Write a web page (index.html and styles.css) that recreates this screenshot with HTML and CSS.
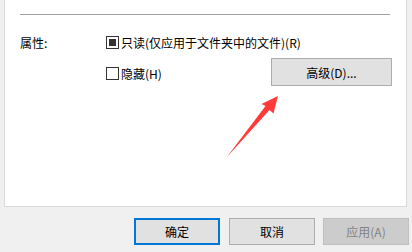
FILE: index.html
```html
<!DOCTYPE html>
<html lang="zh-CN">
<head>
    <meta charset="UTF-8">
    <meta name="viewport" content="width=device-width, initial-scale=1.0">
    <title>属性</title>
    <link rel="stylesheet" href="styles.css">
</head>
<body>
    <div class="dialog">
        <div class="panel">
            <div class="separator"></div>
            <div class="attr-row first">
                <span class="attr-label">属性:</span>
                <label class="check">
                    <span class="box checked"></span>
                    <span>只读(仅应用于文件夹中的文件)(R)</span>
                </label>
            </div>
            <div class="attr-row second">
                <span class="attr-label"></span>
                <label class="check">
                    <span class="box"></span>
                    <span>隐藏(H)</span>
                </label>
                <button class="btn advanced">高级(D)...</button>
            </div>
        </div>
        <div class="actions">
            <button class="btn default">确定</button>
            <button class="btn">取消</button>
            <button class="btn disabled">应用(A)</button>
        </div>
    </div>

    <!-- annotation arrow pointing at the advanced button -->
    <svg class="arrow" width="412" height="252" viewBox="0 0 412 252">
        <polygon points="278,96 273.5,113.5 269.5,110 226.5,157.5 265.5,106 261.5,104" fill="#ff3a3a"/>
    </svg>
</body>
</html>
```

FILE: styles.css
```css
/* Reset default browser styles */
body, html {
    margin: 0;
    padding: 0;
    height: 252px;
    overflow: hidden;
    background: #f0f0f0;
    font-family: "Noto Sans CJK SC", "Noto Sans", sans-serif;
    font-size: 12px;
    color: #000;
}

.dialog {
    display: flex;
    flex-direction: column;
    height: 100%;
}

.panel {
    margin: 0 5px 0 4px;
    height: 207px;
    box-sizing: border-box;
    background: #fff;
    border: 1px solid #d9d9d9;
    border-top: none;
    padding: 14px 15px 0 15px;
}

.separator {
    height: 1px;
    background: #a0a0a0;
    margin-right: 1px;
}

.attr-row {
    display: flex;
    align-items: center;
}

.attr-row.first {
    margin-top: 21px;
    height: 13px;
}

.attr-row.second {
    margin-top: 9px;
    height: 28px;
}

.attr-label {
    width: 86px;
    flex-shrink: 0;
    line-height: 13px;
}

.check {
    display: flex;
    align-items: center;
    gap: 1px;
    line-height: 13px;
    white-space: nowrap;
}

.attr-row.second .check {
    margin-top: 2px;
}

.box {
    width: 13px;
    height: 13px;
    box-sizing: border-box;
    border: 1px solid #333;
    background: #fff;
    padding: 2px;
    margin-right: 1px;
}

.box.checked::after {
    content: "";
    display: block;
    width: 7px;
    height: 7px;
    background: #333;
}

.btn {
    font-family: inherit;
    font-size: 12px;
    color: #000;
    background: #e1e1e1;
    border: 1px solid #adadad;
    padding: 0;
    box-sizing: border-box;
}

.advanced {
    margin-left: auto;
    margin-right: -1px;
    width: 121px;
    height: 28px;
}

.actions {
    display: flex;
    justify-content: flex-end;
    gap: 8px;
    padding: 11px 3px 0 0;
}

.actions .btn {
    width: 86px;
    height: 27px;
}

.btn.default {
    border: 2px solid #0078d7;
    margin-right: 1px;
}

.btn.disabled {
    background: #cccccc;
    border-color: #bfbfbf;
    color: #838383;
}

.arrow {
    position: absolute;
    left: 0;
    top: 0;
    pointer-events: none;
}
```
